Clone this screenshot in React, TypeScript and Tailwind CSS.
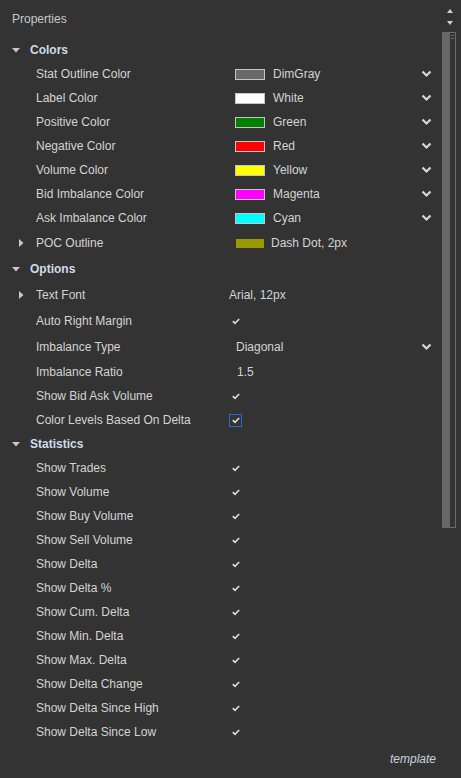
// Properties panel: grouped settings with colour pickers, checks and dropdowns.

type Row =
  | { kind: "header"; label: string; h: number }
  | { kind: "color"; label: string; swatch: string; value: string; h: number }
  | { kind: "stroke"; label: string; swatch: string; value: string; h: number }
  | { kind: "font"; label: string; value: string; h: number }
  | { kind: "check"; label: string; h: number; focused?: boolean }
  | { kind: "select"; label: string; value: string; h: number }
  | { kind: "text"; label: string; value: string; h: number };

const ROWS: Row[] = [
  { kind: "header", label: "Colors", h: 24 },
  { kind: "color", label: "Stat Outline Color", swatch: "#696969", value: "DimGray", h: 24 },
  { kind: "color", label: "Label Color", swatch: "#ffffff", value: "White", h: 24 },
  { kind: "color", label: "Positive Color", swatch: "#008000", value: "Green", h: 24 },
  { kind: "color", label: "Negative Color", swatch: "#ff0000", value: "Red", h: 24 },
  { kind: "color", label: "Volume Color", swatch: "#ffff00", value: "Yellow", h: 24 },
  { kind: "color", label: "Bid Imbalance Color", swatch: "#ff00ff", value: "Magenta", h: 24 },
  { kind: "color", label: "Ask Imbalance Color", swatch: "#00ffff", value: "Cyan", h: 24 },
  { kind: "stroke", label: "POC Outline", swatch: "#999900", value: "Dash Dot, 2px", h: 26 },
  { kind: "header", label: "Options", h: 26 },
  { kind: "font", label: "Text Font", value: "Arial, 12px", h: 26 },
  { kind: "check", label: "Auto Right Margin", h: 26 },
  { kind: "select", label: "Imbalance Type", value: "Diagonal", h: 25 },
  { kind: "text", label: "Imbalance Ratio", value: "1.5", h: 25 },
  { kind: "check", label: "Show Bid Ask Volume", h: 24 },
  { kind: "check", label: "Color Levels Based On Delta", h: 24, focused: true },
  { kind: "header", label: "Statistics", h: 24 },
  { kind: "check", label: "Show Trades", h: 24 },
  { kind: "check", label: "Show Volume", h: 24 },
  { kind: "check", label: "Show Buy Volume", h: 24 },
  { kind: "check", label: "Show Sell Volume", h: 24 },
  { kind: "check", label: "Show Delta", h: 24 },
  { kind: "check", label: "Show Delta %", h: 24 },
  { kind: "check", label: "Show Cum. Delta", h: 24 },
  { kind: "check", label: "Show Min. Delta", h: 24 },
  { kind: "check", label: "Show Max. Delta", h: 24 },
  { kind: "check", label: "Show Delta Change", h: 24 },
  { kind: "check", label: "Show Delta Since High", h: 24 },
  { kind: "check", label: "Show Delta Since Low", h: 24 },
];

function Chevron() {
  return (
    <svg width="11" height="8" viewBox="0 0 11 8" className="mr-[10px]">
      <polyline points="1.5,1.5 5.5,5.5 9.5,1.5" fill="none" stroke="#d8d8d8" strokeWidth="2.2" />
    </svg>
  );
}

function Check() {
  return (
    <svg width="8" height="7" viewBox="0 0 8 7">
      <path d="M0.8 3.2 L3 5.4 L7.2 1" fill="none" stroke="#d8d8d8" strokeWidth="1.7" />
    </svg>
  );
}

function TriDown() {
  return (
    <svg width="8" height="5" viewBox="0 0 8 5">
      <polygon points="0,0 8,0 4,4.5" fill="#c8c8c8" />
    </svg>
  );
}

function TriRight() {
  return (
    <svg width="5" height="8" viewBox="0 0 5 8">
      <polygon points="0,0 4.5,4 0,8" fill="#c8c8c8" />
    </svg>
  );
}

function PropRow({ row }: { row: Row }) {
  const h = { height: row.h };
  if (row.kind === "header") {
    return (
      <div style={h} className="flex shrink-0 items-center">
        <div className="flex w-[30px] justify-center pl-[2px]">
          <TriDown />
        </div>
        <span className="font-bold text-[#cfdce8]">{row.label}</span>
      </div>
    );
  }

  const expandable = row.kind === "stroke" || row.kind === "font";

  return (
    <div style={h} className="flex shrink-0 items-center">
      <div className="flex w-[229px] items-center">
        <div className="flex w-[36px] justify-end pr-[12px]">{expandable && <TriRight />}</div>
        <span>{row.label}</span>
      </div>
      <div className="flex flex-1 items-center">
        {row.kind === "color" && (
          <>
            <span
              className="ml-[6px] h-[11px] w-[30px] border border-[#c4c4c4]"
              style={{ backgroundColor: row.swatch }}
            />
            <span className="ml-[8px] flex-1">{row.value}</span>
            <Chevron />
          </>
        )}
        {row.kind === "stroke" && (
          <>
            <span className="ml-[7px] h-[9px] w-[28px]" style={{ backgroundColor: row.swatch }} />
            <span className="ml-[7px]">{row.value}</span>
          </>
        )}
        {row.kind === "font" && <span>{row.value}</span>}
        {row.kind === "select" && (
          <>
            <span className="ml-[7px] flex-1">{row.value}</span>
            <Chevron />
          </>
        )}
        {row.kind === "text" && <span className="ml-[8px]">{row.value}</span>}
        {row.kind === "check" &&
          (row.focused ? (
            <span className="flex h-[13px] w-[13px] items-center justify-center border border-[#1f6fd6]">
              <Check />
            </span>
          ) : (
            <span className="flex w-[13px] justify-center">
              <Check />
            </span>
          ))}
      </div>
    </div>
  );
}

export default function App() {
  return (
    <div
      className="flex h-[778px] w-[461px] overflow-hidden bg-[#333333] text-[12px] text-[#d4d4d4]"
      style={{ fontFamily: '"Liberation Sans", Arial, sans-serif' }}
    >
      <div className="flex w-[442px] flex-col">
        <div className="flex h-[38px] shrink-0 items-center pl-[12px] text-[#c8c8c8]">Properties</div>
        {ROWS.map((r) => (
          <PropRow key={r.label} row={r} />
        ))}
        <div className="flex h-[34px] shrink-0 items-start justify-end pr-[6px] pt-[6px] italic text-[#c9d2dc]">
          template
        </div>
      </div>

      <div className="flex w-[19px] flex-col">
        <div className="flex flex-col items-center gap-[8px] pt-[9px] pr-[4px]">
          <svg width="6" height="4" viewBox="0 0 6 4">
            <polygon points="0,4 6,4 3,0" fill="#d0d0d0" />
          </svg>
          <svg width="6" height="4" viewBox="0 0 6 4">
            <polygon points="0,0 6,0 3,4" fill="#d0d0d0" />
          </svg>
        </div>
        <div className="mt-[7px] flex h-[496px] w-[14px] border border-[#6a6a6a]">
          <div className="w-[7px] bg-[#676767]" />
          <div className="flex flex-1 flex-col gap-[2px] pt-[2px] pl-[1px] pr-[1px]">
            <div className="h-px bg-[#6a6a6a]" />
            <div className="h-px bg-[#6a6a6a]" />
          </div>
        </div>
      </div>
    </div>
  );
}
